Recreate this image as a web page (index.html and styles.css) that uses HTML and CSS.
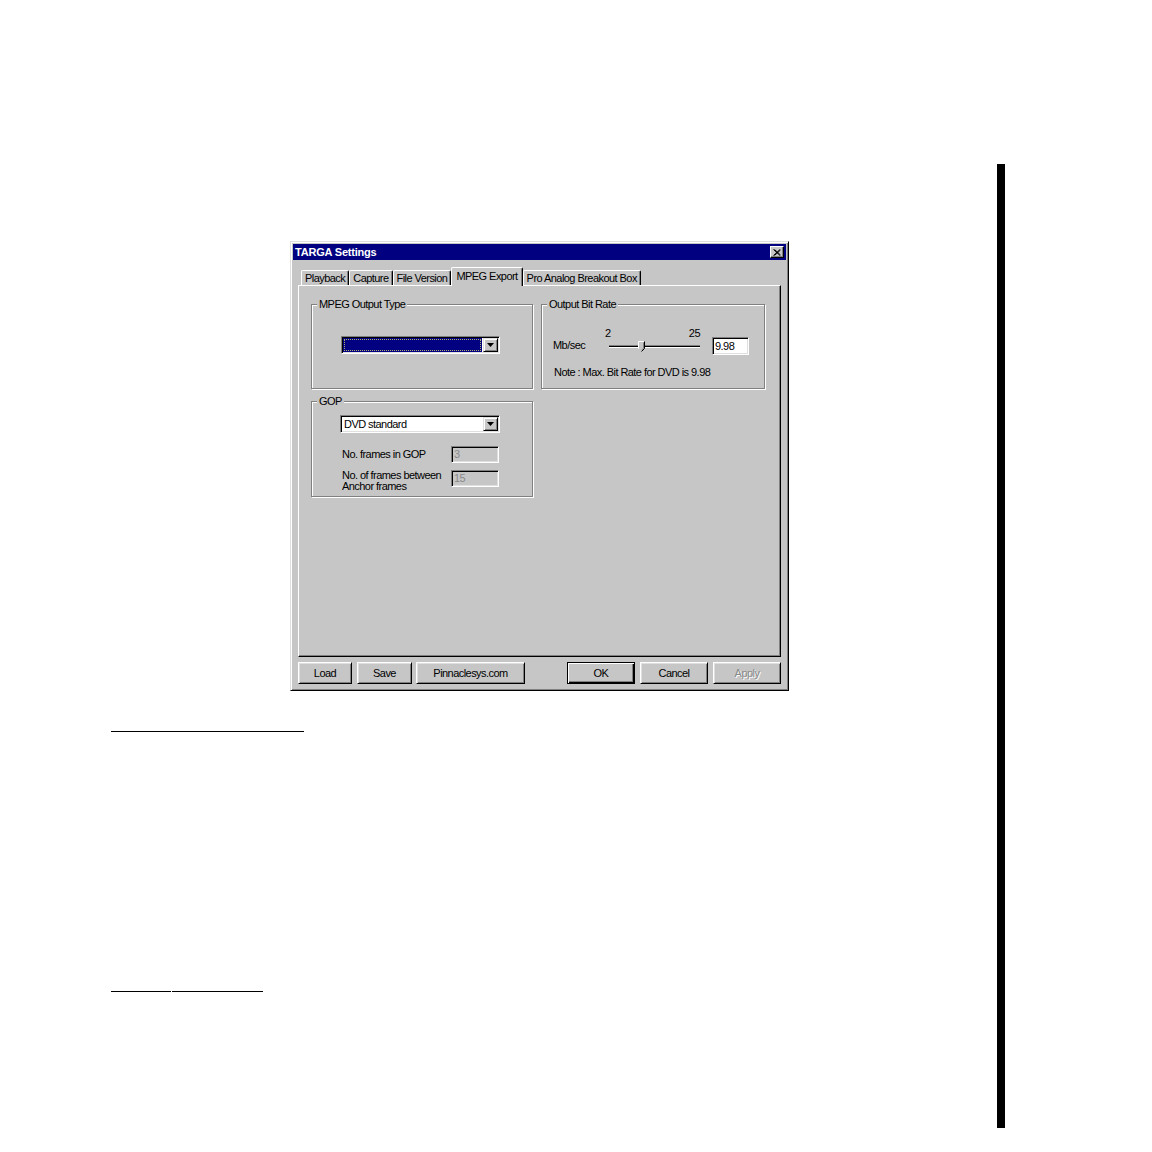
FILE: index.html
```html
<!DOCTYPE html>
<html lang="en">
<head>
<meta charset="utf-8">
<title>TARGA Settings</title>
<link rel="stylesheet" href="styles.css">
</head>
<body>
<div class="page">
  <main class="doc">
    <section class="dialog">
      <header class="titlebar">
        <span class="title">TARGA Settings</span>
        <span class="close">
          <svg width="8" height="7" viewBox="0 0 8 7"><path d="M0.5 0.5 L7 6.5 M1.5 0.5 L7.5 6 M7 0.5 L0.5 6.5 M7.5 1 L1.5 6.5" stroke="#000" stroke-width="1" fill="none"/></svg>
        </span>
      </header>
      <div class="dialog-body">
        <nav class="tabs">
          <span class="tab">Playback</span>
          <span class="tab">Capture</span>
          <span class="tab">File Version</span>
          <span class="tab active">MPEG Export</span>
          <span class="tab">Pro Analog Breakout Box</span>
        </nav>
        <div class="panel">
          <div class="panel-grid">
            <div class="group g-type">
              <div class="group-title">MPEG Output Type</div>
              <div class="combo combo-type">
                <span class="combo-field selected"><span class="focus"></span></span>
                <span class="drop"><svg width="7" height="4" viewBox="0 0 7 4"><polygon points="0,0 7,0 3.5,4" fill="#000"/></svg></span>
              </div>
            </div>
            <div class="group g-rate">
              <div class="group-title">Output Bit Rate</div>
              <div class="rate-row">
                <span class="unit">Mb/sec</span>
                <div class="slider">
                  <div class="scale"><span>2</span><span>25</span></div>
                  <div class="slider-bar">
                    <span class="track seg-left"></span>
                    <svg class="thumb" width="7" height="11" viewBox="0 0 7 11">
                      <path d="M0.5 7.5 V0.5 H6.5 V7.5 L3.5 10.5 Z" fill="#c6c6c6"/>
                      <path d="M0.5 7.8 V0.5 H6" stroke="#fff" fill="none"/>
                      <path d="M6.5 0.5 V7.5 L3.5 10.5" stroke="#000" fill="none"/>
                      <path d="M5.5 1.5 V7.2 L3.5 9.2" stroke="#808080" fill="none"/>
                    </svg>
                    <span class="track seg-right"></span>
                  </div>
                </div>
                <span class="edit">9.98</span>
              </div>
              <div class="note">Note : Max. Bit Rate for DVD is 9.98</div>
            </div>
            <div class="group g-gop">
              <div class="group-title">GOP</div>
              <div class="combo combo-gop">
                <span class="combo-field">DVD standard</span>
                <span class="drop"><svg width="7" height="4" viewBox="0 0 7 4"><polygon points="0,0 7,0 3.5,4" fill="#000"/></svg></span>
              </div>
              <div class="gop-row row-1">
                <span class="gop-label">No. frames in GOP</span>
                <span class="edit disabled">3</span>
              </div>
              <div class="gop-row row-2">
                <span class="gop-label two-line">No. of frames between<br>Anchor frames</span>
                <span class="edit disabled">15</span>
              </div>
            </div>
          </div>
        </div>
        <div class="buttons">
          <span class="btn btn-load">Load</span>
          <span class="btn btn-save">Save</span>
          <span class="btn btn-web">Pinnaclesys.com</span>
          <span class="btn btn-ok default">OK</span>
          <span class="btn btn-cancel">Cancel</span>
          <span class="btn btn-apply disabled">Apply</span>
        </div>
      </div>
    </section>
    <div class="rule rule-1"></div>
    <div class="rule-2"><span class="seg seg-a"></span><span class="seg seg-b"></span></div>
  </main>
  <div class="edge-bar"></div>
</div>
</body>
</html>
```

FILE: styles.css
```css
html, body {
  margin: 0;
  padding: 0;
  background: #fff;
}
body {
  font-family: "Liberation Sans", Arial, sans-serif;
}
.page {
  display: flex;
  align-items: flex-start;
  width: 1152px;
}
.doc {
  flex: none;
  width: 997px;
  padding-top: 241px;
}
.edge-bar {
  flex: none;
  width: 8px;
  height: 964px;
  margin-top: 164px;
  background: #000;
}

/* dialog frame */
.dialog {
  box-sizing: border-box;
  width: 499px;
  height: 450px;
  margin-left: 290px;
  padding: 2px;
  background: #c6c6c6;
  border: 1px solid;
  border-color: #dfdfdf #000 #000 #dfdfdf;
  box-shadow: inset 1px 1px #fff, inset -1px -1px #808080;
  font-size: 11px;
  letter-spacing: -0.55px;
  color: #000;
}
.titlebar {
  height: 16px;
  background: #000080;
  display: flex;
  align-items: center;
  justify-content: space-between;
  padding: 0 2px;
}
.title {
  color: #fff;
  font-weight: bold;
  font-size: 11px;
  letter-spacing: -0.2px;
  line-height: 16px;
}
.close {
  box-sizing: border-box;
  width: 14px;
  height: 12px;
  background: #c6c6c6;
  border: 1px solid;
  border-color: #fff #000 #000 #fff;
  box-shadow: inset -1px -1px #808080;
  display: flex;
  align-items: center;
  justify-content: center;
}
.close svg { display: block; }

.dialog-body {
  padding: 7px 5px 0;
}

/* tabs */
.tabs {
  display: flex;
  align-items: flex-end;
  height: 18px;
  padding-left: 3px;
}
.tab {
  box-sizing: border-box;
  height: 15px;
  padding: 1px 3px 0;
  line-height: 13px;
  white-space: nowrap;
  border-top: 1px solid #fff;
  border-left: 1px solid #fff;
  border-right: 1px solid #000;
  border-radius: 2px 2px 0 0;
  box-shadow: inset -1px 0 #808080;
  background: #c6c6c6;
}
.tab.active {
  height: 19px;
  margin-bottom: -1px;
  padding: 2px 4px 0;
  position: relative;
  z-index: 1;
}

/* panel */
.panel {
  box-sizing: border-box;
  height: 372px;
  border: 1px solid;
  border-color: #fff #000 #000 #fff;
  box-shadow: inset -1px -1px #808080;
  padding: 18px 0 0 12px;
}
.panel-grid {
  display: grid;
  grid-template-columns: 222px 224px;
  grid-template-rows: 85px 96px;
  column-gap: 8px;
  row-gap: 12px;
}
.group {
  box-sizing: border-box;
  border: 1px solid #808080;
  box-shadow: inset 1px 1px #fff, 1px 1px #fff;
}
.g-type { grid-column: 1; grid-row: 1; }
.g-rate { grid-column: 2; grid-row: 1; }
.g-gop  { grid-column: 1; grid-row: 2; }
.group-title {
  width: fit-content;
  margin: -7px 0 0 5px;
  padding: 0 2px;
  line-height: 13px;
  background: #c6c6c6;
  white-space: nowrap;
}

/* combo boxes */
.combo {
  box-sizing: border-box;
  display: flex;
  width: 159px;
  height: 18px;
  padding: 1px;
  background: #fff;
  border: 1px solid;
  border-color: #808080 #fff #fff #808080;
  box-shadow: inset 1px 1px #000, inset -1px -1px #dfdfdf;
}
.combo-type { margin: 25px 0 0 29px; }
.combo-gop  { margin: 7px 0 0 28px; width: 160px; }
.combo-field {
  flex: 1;
  padding-left: 2px;
  line-height: 14px;
  white-space: nowrap;
  overflow: hidden;
}
.combo-field.selected {
  background: #000080;
  padding: 1px;
  margin-right: 1px;
  display: flex;
}
.focus {
  flex: 1;
  border: 1px dotted #b0b070;
}
.drop {
  box-sizing: border-box;
  flex: none;
  width: 15px;
  height: 14px;
  background: #c6c6c6;
  border: 1px solid;
  border-color: #dfdfdf #000 #000 #dfdfdf;
  box-shadow: inset 1px 1px #fff, inset -1px -1px #808080;
  display: flex;
  align-items: center;
  justify-content: center;
}
.drop svg { display: block; }

/* edit boxes */
.edit {
  box-sizing: border-box;
  flex: none;
  display: block;
  background: #fff;
  border: 1px solid;
  border-color: #808080 #fff #fff #808080;
  box-shadow: inset 1px 1px #000, inset -1px -1px #dfdfdf;
  padding-left: 2px;
}
.edit.disabled {
  background: #c6c6c6;
  color: #8a8a8a;
  width: 48px;
  height: 17px;
  line-height: 15px;
}

/* bit rate */
.rate-row {
  display: flex;
  align-items: flex-start;
  margin: 16px 0 0 11px;
}
.unit {
  flex: none;
  width: 52px;
  margin-top: 12px;
  line-height: 13px;
}
.slider {
  flex: none;
  width: 95px;
}
.scale {
  display: flex;
  justify-content: space-between;
  line-height: 13px;
  height: 13px;
}
.slider-bar {
  display: flex;
  align-items: center;
  height: 11px;
  margin: 1px 0 0 4px;
}
.track {
  display: block;
  height: 1px;
  background: #000;
  border-top: 1px solid #808080;
  border-bottom: 1px solid #fff;
}
.seg-left { flex: none; width: 29px; }
.seg-right { flex: 1; }
.thumb { display: block; flex: none; }
.rate-row .edit {
  width: 37px;
  height: 18px;
  line-height: 16px;
  margin: 10px 0 0 12px;
}
.note {
  margin: 11px 0 0 12px;
  line-height: 13px;
  white-space: nowrap;
}

/* GOP */
.gop-row {
  display: flex;
  margin-left: 30px;
}
.row-1 { margin-top: 13px; align-items: center; }
.row-2 { margin-top: 7px; align-items: flex-start; }
.gop-label {
  flex: none;
  width: 109px;
  line-height: 13px;
  white-space: nowrap;
}
.gop-label.two-line { line-height: 11px; }

/* buttons */
.buttons {
  display: flex;
  height: 22px;
  margin-top: 5px;
}
.btn {
  box-sizing: border-box;
  height: 22px;
  line-height: 20px;
  text-align: center;
  background: #c6c6c6;
  border: 1px solid;
  border-color: #fff #000 #000 #fff;
  box-shadow: inset 1px 1px #dfdfdf, inset -1px -1px #808080;
  white-space: nowrap;
}
.btn-load { width: 54px; }
.btn-save { width: 55px; margin-left: 5px; }
.btn-web { width: 109px; margin-left: 4px; }
.btn-ok { width: 68px; margin-left: auto; }
.btn-cancel { width: 68px; margin-left: 5px; }
.btn-apply { width: 68px; margin-left: 5px; }
.btn.default {
  border-color: #000;
  box-shadow: inset 1px 1px #fff, inset -1px -1px #000, inset -2px -2px #808080;
}
.btn.disabled {
  color: #8a8a8a;
  text-shadow: 1px 1px #fff;
}

/* rules */
.rule-1 {
  width: 193px;
  height: 1px;
  background: #000;
  margin: 40px 0 0 111px;
}
.rule-2 {
  display: flex;
  margin: 259px 0 0 111px;
}
.seg {
  display: block;
  height: 1px;
  background: #000;
}
.seg-a { width: 60px; }
.seg-b { width: 91px; margin-left: 1px; }
```
